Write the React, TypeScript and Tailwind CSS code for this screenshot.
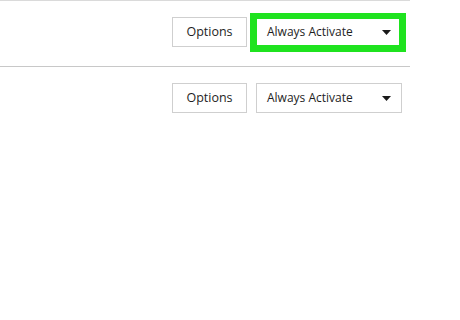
import React from "react";

function Caret() {
  return (
    <svg width="9" height="5" viewBox="0 0 9 5" className="shrink-0">
      <path d="M0 0 L9 0 L4.5 5 Z" fill="#1a1a1a" />
    </svg>
  );
}

export default function App() {
  const font = { fontFamily: '"Open Sans", "Noto Sans", sans-serif' };
  return (
    <div className="w-[460px] h-[320px] bg-white text-[#1e1e1e] overflow-hidden" style={font}>
      <div className="w-[410px]">
        <div className="h-[66px] border-t border-[#dadada] flex items-start pl-[172px] pt-[12px]">
          <button className="mt-[4px] w-[75px] h-[30px] border border-[#cfcfcf] bg-white text-[12.5px] flex items-center justify-center">
            Options
          </button>
          <div className="ml-[3px] w-[156px] h-[39px] border-[7px] border-t-[6px] border-[#1fe31f] bg-white flex items-center pl-[10px] pr-[8px]">
            <span className="text-[12px] flex-1">Always Activate</span>
            <Caret />
          </div>
        </div>
        <div className="border-t border-[#c8c8c8] flex items-start pl-[172px] pt-[16px]">
          <button className="w-[75px] h-[30px] border border-[#cfcfcf] bg-white text-[12.5px] flex items-center justify-center">
            Options
          </button>
          <div className="ml-[9px] w-[146px] h-[30px] border border-[#cfcfcf] bg-white flex items-center pl-[10px] pr-[10px]">
            <span className="text-[12px] flex-1">Always Activate</span>
            <Caret />
          </div>
        </div>
      </div>
    </div>
  );
}
